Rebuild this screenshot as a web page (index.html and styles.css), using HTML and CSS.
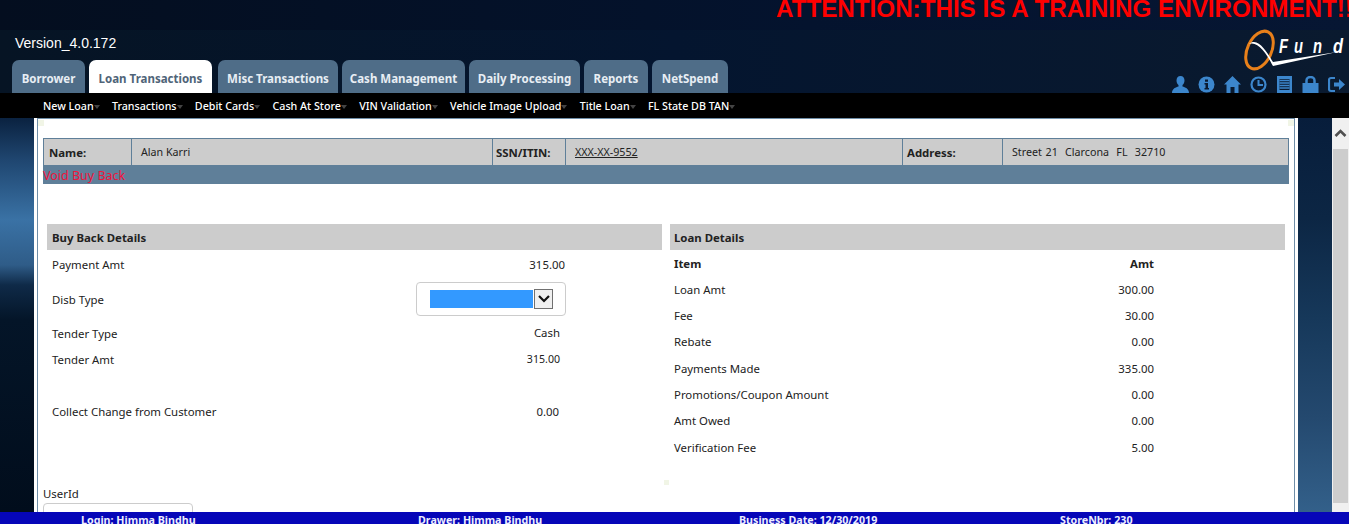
FILE: index.html
```html
<!DOCTYPE html>
<html lang="en">

<head>
  <meta charset="UTF-8">
  <title>QFund - Void Buy Back</title>
  <link rel="stylesheet" href="styles.css">
</head>

<body>
  <div class="page">
    <header class="top">
      <div class="attention">ATTENTION:THIS IS A TRAINING ENVIRONMENT!!</div>
      <div class="version">Version_4.0.172</div>
      <div class="brand">
        <svg class="logo" width="105" height="44" viewBox="0 0 105 44">
          <ellipse cx="15.500" cy="21" rx="12" ry="20" transform="rotate(25 15.500 21)" fill="none" stroke="#e8801a" stroke-width="3"/>
          <path d="M5 15C14 8 22 22 29 33L93 23L29 37C22 24 14 12 5 15z" fill="#fff"/>
          <text x="35" y="24" textLength="9" lengthAdjust="spacingAndGlyphs" class="logo-text">F</text>
          <text x="50" y="24" textLength="9" lengthAdjust="spacingAndGlyphs" class="logo-text">u</text>
          <text x="69" y="24" textLength="9" lengthAdjust="spacingAndGlyphs" class="logo-text">n</text>
          <text x="89" y="24" textLength="10" lengthAdjust="spacingAndGlyphs" class="logo-text">d</text>
        </svg>
      </div>
      <div class="tools">
        <svg width="17" height="17" viewBox="0 0 17 17"><path d="M8.500 0c2.600 0 4 2 4 4.600 0 2-.9 3.700-2 4.500v1.400c2.500.8 6.500 2 6.500 6.500H0c0-4.500 4-5.700 6.500-6.500V9.100c-1.100-.8-2-2.500-2-4.500C4.500 2 5.900 0 8.500 0z" fill="#3c86cc"/></svg>
        <svg width="17" height="17" viewBox="0 0 17 17"><circle cx="8.500" cy="8.500" r="8" fill="#3c86cc"/><path d="M7 3.500h3v2.300H7zM6.500 7h3.500v5h1v1.500H6.500V12h1V8.500h-1z" fill="#0a1a30"/></svg>
        <svg width="17" height="17" viewBox="0 0 17 17"><path d="M8.500 0L17 8.500h-2.500V17h-4v-6h-4v6h-4V8.500H0z" fill="#3c86cc"/></svg>
        <svg width="17" height="17" viewBox="0 0 17 17"><circle cx="8.500" cy="8.500" r="7" fill="none" stroke="#3c86cc" stroke-width="2.200"/><path d="M8.500 4v5H13" fill="none" stroke="#3c86cc" stroke-width="2"/></svg>
        <svg width="17" height="17" viewBox="0 0 17 17"><path d="M1 0h15v17H1z" fill="#3c86cc"/><path d="M3.500 3h10v11h-10z" fill="#0a1a30"/><path d="M3.500 4.500h10M3.500 7h10M3.500 9.500h10M3.500 12h10" stroke="#3c86cc" stroke-width="1.300"/></svg>
        <svg width="17" height="17" viewBox="0 0 17 17"><path d="M0.500 7h16v10H0.500z" fill="#3c86cc"/><path d="M4.500 8V4.500a4 3.500 0 0 1 8 0V8" fill="none" stroke="#3c86cc" stroke-width="2.500"/></svg>
        <svg width="17" height="17" viewBox="0 0 17 17"><path d="M7 2H3a2 2 0 0 0-2 2v9a2 2 0 0 0 2 2h4" fill="none" stroke="#3c86cc" stroke-width="2.200"/><path d="M6 6.500h5V3l6 5.500-6 5.500v-3.500H6z" fill="#3c86cc"/></svg>
      </div>
      <nav class="tabs">
        <a class="tab t-borrower">Borrower</a>
        <a class="tab t-loan active">Loan Transactions</a>
        <a class="tab t-misc">Misc Transactions</a>
        <a class="tab t-cash">Cash Management</a>
        <a class="tab t-daily">Daily Processing</a>
        <a class="tab t-reports">Reports</a>
        <a class="tab t-netspend">NetSpend</a>
      </nav>
    </header>

    <nav class="subnav">
      <a>New Loan</a>
      <a>Transactions</a>
      <a>Debit Cards</a>
      <a>Cash At Store</a>
      <a>VIN Validation</a>
      <a>Vehicle Image Upload</a>
      <a>Title Loan</a>
      <a>FL State DB TAN</a>
    </nav>

    <main class="stage">
      <div class="panel">
        <div class="frame">
          <div class="customer">
            <div class="cell label name-l">Name:</div>
            <div class="cell name-v">Alan Karri</div>
            <div class="cell label ssn-l">SSN/ITIN:</div>
            <div class="cell ssn-v"><u>XXX-XX-9552</u></div>
            <div class="cell label addr-l">Address:</div>
            <div class="cell addr-v">Street 21&nbsp;&nbsp;Clarcona&nbsp;&nbsp;FL&nbsp;&nbsp;32710</div>
          </div>
          <div class="title-bar">Void Buy Back</div>

          <div class="columns">
            <section class="buyback">
              <h3>Buy Back Details</h3>
              <div class="row r-first"><span>Payment Amt</span><span class="amt a1">315.00</span></div>
              <div class="row r-select">
                <span>Disb Type</span>
                <span class="select-box"><span class="select-value"></span><span class="select-btn"><svg width="14" height="10" viewBox="0 0 14 10"><path d="M2 2l5 5 5-5" fill="none" stroke="#111" stroke-width="2.200"/></svg></span></span>
              </div>
              <div class="row r-tender"><span>Tender Type</span><span class="amt a2">Cash</span></div>
              <div class="row r-amt"><span>Tender Amt</span><span class="amt a3">315.00</span></div>
              <div class="row r-change"><span>Collect Change from Customer</span><span class="amt a4">0.00</span></div>
            </section>

            <section class="loan">
              <h3>Loan Details</h3>
              <div class="line head"><span>Item</span><span>Amt</span></div>
              <div class="line"><span>Loan Amt</span><span>300.00</span></div>
              <div class="line"><span>Fee</span><span>30.00</span></div>
              <div class="line"><span>Rebate</span><span>0.00</span></div>
              <div class="line"><span>Payments Made</span><span>335.00</span></div>
              <div class="line"><span>Promotions/Coupon Amount</span><span>0.00</span></div>
              <div class="line"><span>Amt Owed</span><span>0.00</span></div>
              <div class="line"><span>Verification Fee</span><span>5.00</span></div>
            </section>
          </div>

          <div class="user">
            <div class="user-label">UserId</div>
            <div class="user-input"></div>
          </div>
          <i class="dot"></i>
        </div>
      </div>
      <div class="scrollbar">
        <div class="scroll-up"><svg width="13" height="9" viewBox="0 0 13 9"><path d="M1.500 7l5-5 5 5" fill="none" stroke="#505050" stroke-width="2.600"/></svg></div>
        <div class="scroll-thumb"></div>
      </div>
    </main>

    <footer class="status">
      <span class="s1">Login: Himma Bindhu</span>
      <span class="s2">Drawer: Himma Bindhu</span>
      <span class="s3">Business Date: 12/30/2019</span>
      <span class="s4">StoreNbr: 230</span>
    </footer>
  </div>
</body>

</html>
```

FILE: styles.css
```css
html,
body {
  margin: 0;
  height: 100%;
  overflow: hidden;
}

body {
  font-family: "Noto Sans", "Open Sans", sans-serif;
  font-size: 11.400px;
  color: #222;
}

.page {
  display: flex;
  flex-direction: column;
  height: 524px;
}

/* header */
.top {
  position: relative;
  height: 93px;
  flex: none;
  overflow: hidden;
  background:
    linear-gradient(to right, #040e1f, #04132e 60%, #061633) 0 0 / 100% 30px no-repeat,
    linear-gradient(to right, #061424, #04152f 50%, #0a1a2f);
}

.attention {
  position: absolute;
  top: -5px;
  left: 776px;
  font: bold 24.200px/28px "Liberation Sans", Arial, sans-serif;
  color: #f00;
  white-space: nowrap;
}

.version {
  position: absolute;
  top: 35px;
  left: 15px;
  font: 14px/17px "Liberation Sans", Arial, sans-serif;
  color: #fff;
}

.brand {
  position: absolute;
  top: 29px;
  left: 1244px;
}

.logo {
  display: block;
}

.logo-text {
  font: italic bold 20px "Liberation Sans", Arial, sans-serif;
  fill: #fff;
}

.tools {
  position: absolute;
  top: 76px;
  right: 4px;
  display: flex;
  gap: 9px;
}

.tabs {
  position: absolute;
  left: 12px;
  bottom: 0;
  display: flex;
  gap: 4px;
}

.tab {
  display: block;
  height: 33px;
  box-sizing: border-box;
  font-weight: bold;
  font-size: 11.500px;
  line-height: 37px;
  text-align: center;
  color: #e8eef4;
  background: #4f6d88;
  border-radius: 7px 7px 0 0;
  white-space: nowrap;
}

.tab.active {
  color: #4f6478;
  background: #fff;
}

.t-borrower { width: 73px; }
.t-loan { width: 123px; margin-right: 2px; }
.t-misc { width: 120px; }
.t-cash { width: 123px; }
.t-daily { width: 111px; }
.t-reports { width: 64px; }
.t-netspend { width: 76px; }

/* sub menu */
.subnav {
  flex: none;
  display: flex;
  height: 25px;
  padding-left: 43px;
  gap: 18.300px;
  background: #000;
  color: #fff;
  font-size: 10.700px;
  font-weight: 500;
  line-height: 26px;
}

.subnav a {
  white-space: nowrap;
  position: relative;
}

.subnav a::after {
  content: "";
  position: absolute;
  top: 12px;
  right: -6px;
  border: 3px solid transparent;
  border-top: 4px solid #444;
}

/* content */
.stage {
  flex: 1;
  display: flex;
  min-height: 0;
  padding-left: 34px;
  background:
    linear-gradient(to bottom, #0a2240 0, #1f4670 42px, #3a72a5 102px, #2f5c88 147px, #0f2a48 167px, #041528 202px, #010d1c 394px) 0 0 / 34px 100% no-repeat,
    linear-gradient(to bottom, #071d3b 0, #0c2644 100px, #16385a 200px, #24496f 300px, #33608a 394px);
}

.panel {
  flex: none;
  box-sizing: border-box;
  width: 1264px;
  height: 394px;
  padding: 0 3px 0 3px;
  overflow: hidden;
  background: #fff;
}

.frame {
  position: relative;
  box-sizing: border-box;
  height: 394px;
  padding: 19px 5px 0 5px;
  border: 1px solid #6f8ea8;
  border-bottom: 0;
  overflow: hidden;
}

.frame::before,
.frame::after {
  content: "";
  position: absolute;
  top: 1px;
  width: 6px;
  height: 6px;
  background: #f1f5e6;
}

.frame::before {
  left: 0;
}

.frame::after {
  right: 0;
}

.dot {
  position: absolute;
  left: 626px;
  top: 361px;
  width: 5px;
  height: 5px;
  background: #f1f5e6;
}

.customer {
  display: flex;
  height: 27px;
  box-sizing: border-box;
  border: 1px solid #5f7f99;
  border-bottom: 0;
  background: #ccc;
}

.cell {
  box-sizing: border-box;
  padding-left: 9px;
  line-height: 26px;
  border-right: 1px solid #5f7f99;
  white-space: nowrap;
  font-size: 10.700px;
}

.cell.label {
  font-weight: bold;
  font-size: 11.400px;
  padding-left: 5px;
  line-height: 28px;
}

.name-l { width: 88px; }
.name-v { width: 361px; }
.cell.ssn-l { width: 73px; padding-left: 3px; }
.ssn-v { width: 337px; }
.cell.addr-l { width: 100px; padding-left: 4px; }
.addr-v { flex: 1; border-right: 0; word-spacing: .9px; }

.title-bar {
  height: 19px;
  line-height: 21px;
  background: #5f7f99;
  color: #f0143c;
  font-size: 12.500px;
}

.columns {
  display: flex;
  gap: 8px;
  margin: 40px 4px 0;
}

.columns h3 {
  margin: 0;
  height: 26px;
  padding-left: 4px;
  background: #ccc;
  font-size: 11.400px;
  line-height: 28px;
}

.buyback {
  width: 615px;
  flex: none;
}

.buyback h3 {
  padding-left: 5px;
}

.loan {
  flex: 1;
}

.row {
  display: flex;
  box-sizing: border-box;
  align-items: center;
  padding: 0 0 2px 5px;
  position: relative;
}

.amt {
  position: absolute;
  top: 0;
}

.r-first { height: 31px; }
.r-select { height: 38px; }
.r-tender { height: 30px; }
.r-amt { height: 22px; }
.r-change { height: 30px; margin-top: 26px; }

.a1 { right: 97px; top: 7px; }
.a2 { right: 102px; top: 6px; }
.a3 { right: 102px; top: 3px; font-size: 10.600px; }
.a4 { right: 103px; top: 7px; }

.select-box {
  position: absolute;
  left: 369px;
  top: 1px;
  display: flex;
  align-items: center;
  box-sizing: border-box;
  width: 150px;
  height: 34px;
  padding-left: 13px;
  border: 1px solid #ccc;
  border-radius: 4px;
}

.select-value {
  width: 103px;
  height: 18px;
  background: #3399ff;
}

.select-btn {
  display: flex;
  align-items: center;
  justify-content: center;
  width: 17px;
  height: 18px;
  margin-left: 1px;
  border: 1px solid #707070;
  background: #f0f0f0;
}

.line {
  display: flex;
  justify-content: space-between;
  box-sizing: border-box;
  height: 26.300px;
  padding: 4.550px 131px 0 4px;
  line-height: 18px;
}

.line.head {
  font-weight: bold;
}

.user {
  margin-top: 25px;
}

.user-label {
  line-height: 18px;
}

.user-input {
  box-sizing: border-box;
  width: 150px;
  height: 34px;
  border: 1px solid #ccc;
  border-radius: 4px;
}

.scrollbar {
  flex: none;
  margin-left: 34px;
  width: 17px;
  height: 394px;
  background: #f0f0f0;
  display: flex;
  flex-direction: column;
}

.scroll-up {
  height: 31px;
  display: flex;
  align-items: center;
  justify-content: center;
}

.scroll-thumb {
  width: 15px;
  margin-left: 1px;
  height: 354px;
  background: #cdcdcd;
}

/* footer */
.status {
  flex: none;
  position: relative;
  height: 12px;
  overflow: hidden;
  background: #0606b8;
  color: #eef;
  font-weight: bold;
  font-size: 10.700px;
  line-height: 17px;
}

.status span {
  position: absolute;
  top: 0;
  white-space: nowrap;
}

.s1 { left: 81px; }
.s2 { left: 418px; }
.s3 { left: 739px; }
.s4 { left: 1060px; }
```
